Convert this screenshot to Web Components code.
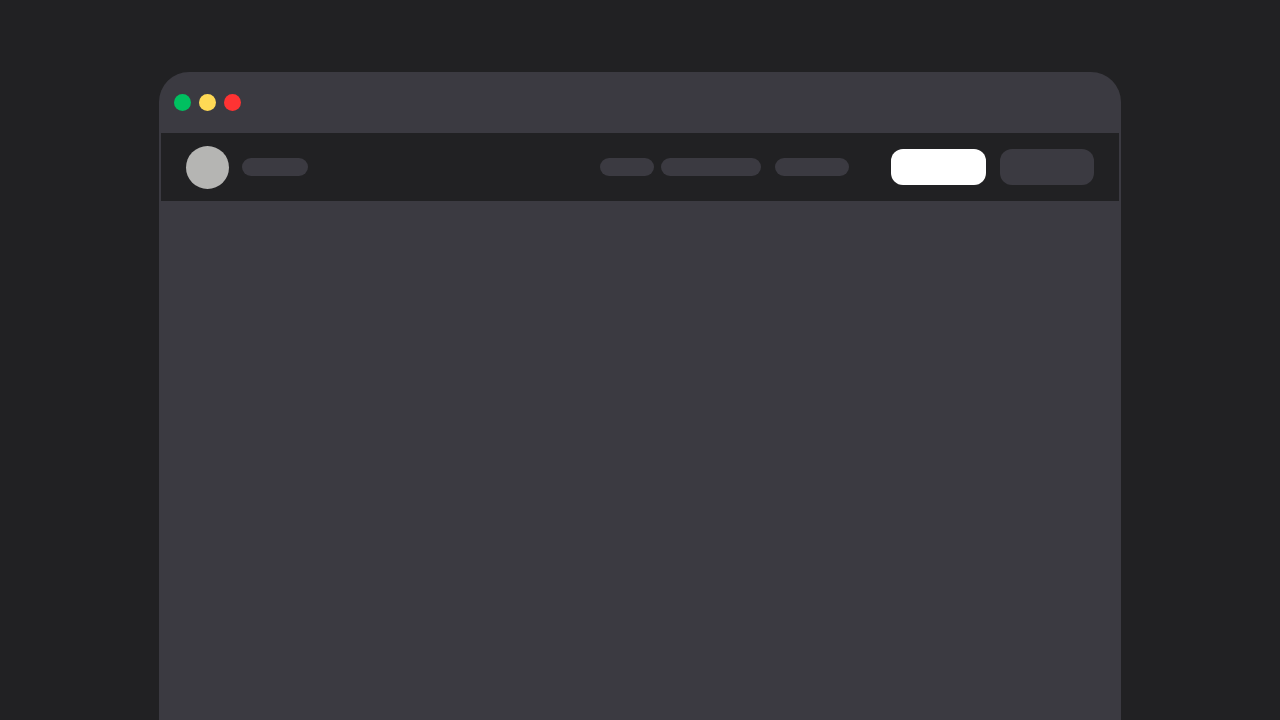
<!DOCTYPE html>
<html lang="en">
<head>
<meta charset="utf-8">
<title>Skeleton window</title>
<style>
html,body{margin:0;height:100%;background:#212123;overflow:hidden}
body{display:flex;justify-content:center;padding-top:72px;box-sizing:border-box}
</style>
</head>
<body>
<app-window>
  <traffic-dot slot="controls" style="--c:#00c060"></traffic-dot>
  <traffic-dot slot="controls" style="--c:#ffd955"></traffic-dot>
  <traffic-dot slot="controls" style="--c:#ff3333"></traffic-dot>
  <nav-bar>
    <skel-pill slot="brand" style="--w:66.5px"></skel-pill>
    <skel-pill slot="links" style="--w:54.5px"></skel-pill>
    <skel-pill slot="links" style="--w:100px;--ml:7px"></skel-pill>
    <skel-pill slot="links" style="--w:74px;--ml:13.5px"></skel-pill>
    <skel-button slot="actions" style="--bg:#fff"></skel-button>
    <skel-button slot="actions" style="--bg:#3b3a41"></skel-button>
  </nav-bar>
</app-window>
<script>
function def(name, html){
  customElements.define(name, class extends HTMLElement{
    constructor(){super();this.attachShadow({mode:'open'}).innerHTML=html;}
  });
}
def('traffic-dot',`<style>:host{display:block;width:17px;height:17px;border-radius:50%;background:var(--c)}</style>`);
def('skel-pill',`<style>:host{display:block;flex:none;width:var(--w);height:17.5px;margin-left:var(--ml,0);border-radius:9px;background:#3b3a41}</style>`);
def('skel-button',`<style>:host{display:block;flex:none;width:94.5px;height:36px;border-radius:12px;background:var(--bg)}</style>`);
def('app-window',`<style>
:host{display:flex;flex-direction:column;flex:none;width:962px;height:648px;box-sizing:border-box;padding:0 2px;background:#3b3a41;border-radius:30px 30px 0 0}
.controls{display:flex;gap:8px;height:61px;align-items:center;padding-left:13px}
</style><div class="controls"><slot name="controls"></slot></div><slot></slot>`);
def('nav-bar',`<style>
:host{display:flex;align-items:center;height:68px;background:#212123;padding:0 25px;box-sizing:border-box}
.avatar{width:43px;height:43px;border-radius:50%;background:#b5b5b3;flex:none}
.brand{display:flex;margin-left:12.5px;width:358.5px}
.links{display:flex;align-items:center;width:291.5px}
.actions{display:flex;gap:14px;margin-left:auto}
</style>
<div class="avatar"></div>
<div class="brand"><slot name="brand"></slot></div>
<div class="links"><slot name="links"></slot></div>
<div class="actions"><slot name="actions"></slot></div>`);
</script>
</body>
</html>
